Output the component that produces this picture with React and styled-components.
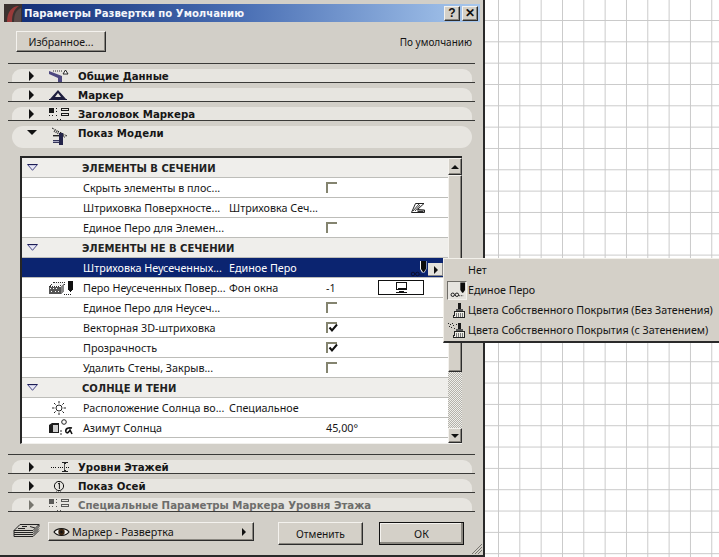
import React from "react";
import styled, { createGlobalStyle, css } from "styled-components";

const Global = createGlobalStyle`
  html, body { margin: 0; padding: 0; }
  body {
    width: 719px; height: 557px; overflow: hidden; background-color: #fff;
    background-image:
      linear-gradient(to right, #c9c9c9 1px, transparent 1px),
      linear-gradient(to bottom, #c9c9c9 1px, transparent 1px);
    background-size: 21.33px 21.33px;
    background-position: 498px 20px;
    font-family: "Noto Sans", "Open Sans", sans-serif;
    font-size: 10.75px;
    color: #141414;
  }
`;

const raised = css`
  background: #d4d0c8;
  border: 1px solid;
  border-color: #f4f2ee #2c2c2c #2c2c2c #f4f2ee;
  box-shadow: inset -1px -1px 0 #8a8780;
`;

const Window = styled.div`
  position: relative;
  box-sizing: border-box;
  width: 485px;
  height: 557px;
  background: #d2cfc8;
  border-right: 2px solid #2a2a2a;
  border-bottom: 2px solid #2a2a2a;
  padding-top: 4px;
  display: flex;
  flex-direction: column;
`;

const TitleBar = styled.div`
  height: 18px;
  margin: 0 3px 0 4px;
  display: flex;
  align-items: center;
  background: linear-gradient(to right, #0f2a72 0%, #4a6fb4 50%, #a8c8ee 100%);
`;

const TitleText = styled.div`
  flex: 1;
  margin-left: 2px;
  color: #f4f6fb;
  font-family: "DejaVu Sans", sans-serif;
  font-weight: 700;
  font-size: 10.15px;
  white-space: nowrap;
`;

const CaptionButton = styled.div`
  ${raised}
  box-sizing: border-box;
  width: 16px;
  height: 15px;
  margin-right: ${p => p.$gap}px;
  display: flex;
  align-items: center;
  justify-content: center;
  font-family: "Liberation Sans", sans-serif;
  font-weight: 700;
  font-size: 12px;
  color: #111;
`;

const TopRow = styled.div`
  box-sizing: border-box;
  height: 41px;
  padding: 9px 11px 0 16px;
  display: flex;
  align-items: flex-start;
  justify-content: space-between;
`;

const Button = styled.div`
  ${raised}
  box-sizing: border-box;
  width: ${p => p.$w}px;
  height: ${p => p.$h}px;
  display: flex;
  align-items: center;
  justify-content: center;
  font-size: ${p => p.$fs}px;
  ${p => p.$primary && css`
    outline: 1px solid #111;
    outline-offset: -1px;
    box-shadow: inset -2px -2px 0 #8a8780, inset 1px 1px 0 #f4f2ee;
  `}
`;

const DefaultLabel = styled.div`
  margin-top: 3px;
  font-size: 10px;
  line-height: 16px;
`;

const Rule = styled.div`
  height: 1px;
  margin: 0 8px;
  background: #3a3a38;
`;

const Section = styled.div`
  padding-top: 5px;
  margin: 0 8px;
  border-bottom: ${p => (p.$open ? "none" : "1px solid #3a3a38")};
`;

const Pill = styled.div`
  position: relative;
  box-sizing: border-box;
  height: ${p => (p.$open ? 22 : 13)}px;
  margin: 0 3px 0 4px;
  padding-left: 16px;
  background: #e7e5e0;
  border-radius: ${p => (p.$open ? "11px" : "9px 9px 0 0")};
  display: flex;
  align-items: ${p => (p.$open ? "flex-start" : "center")};
  color: ${p => (p.$dim ? "#6e6e6c" : "#161616")};
`;

const Caret = styled.div`
  width: 0;
  height: 0;
  margin-top: ${p => (p.$open ? 4 : 0)}px;
  border-style: solid;
  ${p => p.$open
    ? css`margin-left: -1px; border-width: 5px 5px 0 5px; border-color: #111 transparent transparent transparent; margin-right: 6px;`
    : css`border-width: 5px 0 5px 5px; border-color: transparent transparent transparent ${p.$dim ? "#77766f" : "#111"}; margin-left: 1px; margin-right: 8px;`}
`;

const PanelIcon = styled.div`
  width: 23px;
  height: 18px;
  margin-left: 5px;
  margin-top: ${p => (p.$open ? -1 : 3)}px;
  flex: none;
  display: flex;
  justify-content: center;
`;

const PanelTitle = styled.div`
  margin-left: ${p => (p.$open ? 7 : 8)}px;
  margin-top: ${p => (p.$open ? 1 : 2)}px;
  font-family: "DejaVu Sans", sans-serif;
  font-weight: 700;
  font-size: 10.2px;
  line-height: 14px;
  white-space: nowrap;
`;

const ListWrap = styled.div`
  margin: 8px 21px 0 20px;
  height: 288px;
  display: flex;
  border-top: 2px solid #262626;
  border-left: 2px solid #262626;
  border-bottom: 1px solid #f2f1ee;
  box-sizing: border-box;
  background: #fff;
`;

const List = styled.div`
  flex: 1;
  min-width: 0;
  overflow: hidden;
`;

const Row = styled.div`
  box-sizing: border-box;
  height: 20px;
  display: grid;
  grid-template-columns: 62px 145px 97px 52px 1fr;
  align-items: center;
  border-bottom: 1px solid #bdbdb9;
  background: ${p => (p.$sel ? "#0b2470" : p.$head ? "#efeeeb" : "#fff")};
  color: ${p => (p.$sel ? "#fff" : "#161616")};
  position: relative;
`;

const Name = styled.div`
  white-space: nowrap;
  overflow: visible;
  margin-left: -1px;
  ${p => p.$head && css`
    margin-left: -2px;
    margin-top: 2px;
    font-family: "DejaVu Sans", sans-serif;
    font-weight: 700;
    font-size: 10px;
    color: #222;
  `}
`;

const Cell = styled.div`
  white-space: nowrap;
  display: flex;
  align-items: center;
`;

const Check = styled.div`
  position: relative;
  box-sizing: border-box;
  width: 11px;
  height: 11px;
  border-top: 2px solid #84846f;
  border-left: 2px solid #84846f;
  margin-top: -1px;
`;

const Tick = styled.svg`
  position: absolute;
  left: 0;
  top: -1px;
`;

const ColorBox = styled.div`
  box-sizing: border-box;
  width: 46px;
  height: 15px;
  border: 1px solid #111;
  display: flex;
  align-items: center;
  justify-content: center;
`;

const Scroll = styled.div`
  width: 14px;
  flex: none;
  display: flex;
  flex-direction: column;
  background-color: #e6e5e0;
  background-image: repeating-conic-gradient(#b4b2ab 0 25%, #efeeea 0 50%);
  background-size: 2px 2px;
`;

const ScrollBtn = styled.div`
  ${raised}
  box-sizing: border-box;
  height: ${p => p.$h}px;
  display: flex;
  align-items: center;
  justify-content: center;
  flex: none;
`;

const Arrow = styled.div`
  width: 0;
  height: 0;
  border-style: solid;
  border-width: ${p => (p.$up ? "0 4px 4px 4px" : "4px 4px 0 4px")};
  border-color: ${p => (p.$up ? "transparent transparent #111 transparent" : "#111 transparent transparent transparent")};
`;

const Spacer = styled.div`
  flex: 1;
`;

const ListGap = styled.div`
  height: 10px;
  flex: none;
`;

const RowArrowBtn = styled.div`
  position: absolute;
  left: 406px;
  top: 5px;
  width: 15px;
  height: 13px;
  background: #e4e2dc;
  box-shadow: inset -1px -1px 0 #888;
  display: flex;
  align-items: center;
  justify-content: center;
`;

const RightTri = styled.div`
  width: 0;
  height: 0;
  border-style: solid;
  border-width: 4px 0 4px 4px;
  border-color: transparent transparent transparent #111;
`;

const RowIcons = styled.div`
  position: absolute;
  left: 386px;
  top: 3px;
  line-height: 0;
`;

const BottomRow = styled.div`
  padding: 10px 0 0 13px;
  display: flex;
  align-items: flex-start;
`;

const LayersBox = styled.div`
  width: 27px;
  margin: 1px 8px 0 0;
  line-height: 0;
`;

const Popup = styled.div`
  ${raised}
  width: 206px;
  height: 19px;
  box-sizing: border-box;
  padding: 0 7px 0 4px;
  display: flex;
  align-items: center;
  gap: 2px;
  margin-right: 24px;
`;

const PopupText = styled.div`
  flex: 1;
  white-space: nowrap;
`;

const OkGap = styled.div`
  width: 16px;
`;

const Grip = styled.svg`
  position: absolute;
  right: 0;
  bottom: 0;
`;

const Menu = styled.div`
  position: absolute;
  left: 443px;
  top: 258px;
  box-sizing: border-box;
  width: 276px;
  height: 85px;
  padding: 1px 0 0 3px;
  background: #d4d0c8;
  border-top: 1px solid #f2f0ea;
  border-left: 1px solid #f2f0ea;
  border-bottom: 2px solid #2a2a2a;
`;

const MenuItem = styled.div`
  height: 20px;
  display: flex;
  align-items: center;
  white-space: nowrap;
`;

const MenuIcon = styled.div`
  box-sizing: border-box;
  width: 20px;
  height: 19px;
  margin-right: 1px;
  flex: none;
  line-height: 0;
  display: flex;
  align-items: center;
  justify-content: flex-end;
  ${p => p.$on && css`
    border: 1px solid;
    border-color: #6f6d68 #f4f2ee #f4f2ee #6f6d68;
    background: #e6e4df;
  `}
`;

const MenuText = styled.div`
  font-size: 10.7px;
`;

const HeadIcon = styled.div`
  padding-left: 5px;
  line-height: 0;
`;

const RowIconCell = styled.div`
  display: flex;
  padding-left: ${p => p.$pad || 26}px;
  line-height: 0;
`;

const HatchCell = styled.div`
  padding-left: 33px;
  line-height: 0;
`;

const Ink = "#1e1e3e";
const Violet = "#4d4880";

const Svg = ({ w, h, children }) => (
  <svg width={w} height={h} viewBox={`0 0 ${w} ${h}`} shapeRendering="crispEdges">{children}</svg>
);

const IconGeneral = () => (
  <svg width="23" height="16" viewBox="0 0 23 16">
    <path d="M2 3 L15 8 V14 H11 V10 L2 6 Z" fill={Violet} />
    <path d="M6 3 H16" stroke="#333" strokeDasharray="1 1" />
    <path d="M16 6 L18.5 2 L21 6 Z" fill="#fff" stroke="#222" />
  </svg>
);
const IconMarker = () => (
  <Svg w={19} h={14}>
    <path d="M1 12 L9 3 L17 12 Z M6 10 L12 10 L9 6 Z" fill={Ink} fillRule="evenodd" shapeRendering="auto" />
    <path d="M0 12 H18 V13 H0 Z" fill={Ink} />
  </Svg>
);
const IconHeader = ({ dim }) => {
  const c = dim ? "#5a5a58" : "#1a1a1a";
  return (
    <Svg w={21} h={17}>
      <path d="M1 2 H6 V7 H1 Z" fill={c} />
      <path d="M8 2 H9 V3 H8 Z M8 5 H9 V6 H8 Z M1 9 H2 V10 H1 Z M4 9 H5 V10 H4 Z M8 9 H9 V10 H8 Z M9 13 H10 V14 H9 Z M12 13 H13 V14 H12 Z" fill={c} />
      <path d="M13.5 2.5 H20.5 V4.5 H13.5 Z M13.5 7.5 H20.5 V9.5 H13.5 Z" fill="none" stroke={c} />
    </Svg>
  );
};
const IconModel = () => (
  <svg width="19" height="21" viewBox="0 0 19 21">
    <path d="M2 3 L17 11" stroke="#222" strokeDasharray="2 1" />
    <path d="M4 6 L15 12" stroke="#333" strokeDasharray="1 1" strokeWidth="2" />
    <path d="M9 8 H13 V20 H9 Z" fill="#24244a" />
    <path d="M3 10 H9 V11.4 H3 Z" fill="#222" />
    <path d="M3 15 H9 V18 H3 Z" fill="#34345a" />
    <path d="M3 16 H9 V17 H3 Z" fill="#a8a8c0" />
  </svg>
);
const IconLevels = () => (
  <Svg w={20} h={15}>
    <path d="M2 8 H7 M9 8 H20" stroke="#111" strokeDasharray="1 1" />
    <path d="M13 3 H19 V4 H17 L16 5 H15 L14 4 H13 Z M13 13 H19 V12 H17 L16 11 H15 L14 12 H13 Z" fill="#222" />
    <path d="M15 5 V11" stroke="#555" />
  </Svg>
);
const IconAxis = () => (
  <svg width="12" height="15" viewBox="0 0 12 15">
    <circle cx="6" cy="8" r="4.6" fill="none" stroke="#111" />
    <path d="M5 6 L6.4 5 V11" fill="none" stroke="#111" />
    <path d="M3 14 H9" stroke="#333" strokeDasharray="1 1" />
  </svg>
);
const IconLayers = () => (
  <svg width="27" height="16" viewBox="0 0 27 16">
    <g fill="none" stroke="#222">
      <path d="M7 1.5 H26 L20 7.5 H1 Z" />
      <path d="M1 7.5 V9.5 H20 L26 3.5 V1.5" />
      <path d="M1 9.5 V11.5 H20 L26 5.5" />
      <path d="M1 11.5 V13.5 H20 L26 7.5" />
      <path d="M9 3.5 H14 M5 5.5 H12 M17 3.5 L22 5" />
    </g>
  </svg>
);
const IconEye = () => (
  <svg width="17" height="12" viewBox="0 0 17 12">
    <path d="M1 6 C4 1.5 13 1.5 16 6 C13 10.5 4 10.5 1 6 Z" fill="#f4f2ee" stroke="#111" strokeWidth="1.2" />
    <circle cx="8.5" cy="6" r="3.2" fill="#3a2410" />
    <circle cx="8.5" cy="6" r="1.2" fill="#111" />
  </svg>
);
const IconMonitor = () => (
  <Svg w={13} h={11}>
    <path d="M1.5 0.5 H11.5 V7.5 H1.5 Z" fill="#fff" stroke="#111" />
    <path d="M3 6 H11 V8 H3 Z" fill="#111" />
    <path d="M4 9 H9 V10 H4 Z M1 10 H12 V11 H1 Z" fill="#111" />
  </Svg>
);
const IconHatch = () => (
  <svg width="14" height="10" viewBox="0 0 14 10">
    <path d="M4.5 0.5 H13 L6.5 6.5 L13.5 7 V9.5 H0.5 Z" fill="#fff" stroke="#222" />
    <path d="M2 8 L8 1 M4 8 L9 2 M6 8 H13 M7 8.5 H12" stroke="#222" strokeWidth="0.9" />
  </svg>
);
const IconPen = ({ light }) => {
  const ring = light ? "#0a0f2e" : "#111";
  return (
    <svg width="19" height="17" viewBox="0 0 19 17">
      {light && <path d="M12 0 H18.5 V8 L16.5 11.5 H14 L12 8 Z" fill="#f2f2f2" />}
      <path d="M13 0 H18 V8 L16 11 H15 L13 8 Z" fill="#0c0c0c" />
      <circle cx="5" cy="13" r="1.8" fill="none" stroke={ring} />
      <circle cx="9.4" cy="13" r="1.8" fill="none" stroke={ring} />
      <path d="M11.5 14 H16" stroke={ring} strokeDasharray="1 1" />
    </svg>
  );
};
const IconHatchPen = () => (
  <Svg w={26} h={16}>
    <path d="M2 6 L6 2 H16 V5 L12 6 Z" fill="#f4f4f4" stroke="#333" strokeDasharray="1 1" />
    <path d="M1 7 H13 V14 H1 Z" fill="#555" />
    <path d="M2 8 H3 V9 H2 Z M5 8 H6 V9 H5 Z M8 8 H9 V9 H8 Z M3 11 H4 V12 H3 Z M7 11 H8 V12 H7 Z M10 11 H11 V12 H10 Z" fill="#fff" />
    <path d="M13 6 L16 4 V11 L13 14 Z" fill="#888" />
    <path d="M20 1 H25 V9 L23 12 H22 L20 9 Z" fill="#111" />
    <path d="M16 14 H24" stroke="#222" strokeDasharray="1 1" />
  </Svg>
);
const IconSun = () => (
  <svg width="14" height="14" viewBox="0 0 14 14">
    <circle cx="7" cy="7" r="3" fill="#fff" stroke="#222" />
    <path d="M7 0 V2.4 M7 11.6 V14 M0 7 H2.4 M11.6 7 H14 M2 2 L3.6 3.6 M10.4 10.4 L12 12 M12 2 L10.4 3.6 M3.6 10.4 L2 12" stroke="#222" />
  </svg>
);
const IconAzimuth = () => (
  <svg width="26" height="17" viewBox="0 0 26 17">
    <path d="M1 6 L4 4 H11 V14 H1 Z" fill="#1d1d1d" />
    <path d="M5 6 H10 V13 H5 Z" fill="#cfcfcf" />
    <circle cx="16" cy="3" r="2.3" fill="#fff" stroke="#222" />
    <path d="M14 12 H12 M14 15 H12" stroke="#333" />
    <path d="M24 9 C20 8 17 10 18 13 C19 15 21 13 22 11 L24 15" fill="none" stroke="#111" strokeWidth="1.6" />
  </svg>
);
const IconSunSmall = () => (
  <svg width="22" height="10" viewBox="0 0 22 10">
    <circle cx="14" cy="4" r="2.4" fill="#fff" stroke="#222" />
    <path d="M5 3 L7 7 H3 Z" fill="#222" />
  </svg>
);
const IconBrush = ({ dots }) => (
  <Svg w={20} h={17}>
    {dots && <path d="M1 1 H2 V2 H1 Z M3 2 H4 V3 H3 Z M5 1 H6 V2 H5 Z M2 4 H3 V5 H2 Z M4 5 H5 V6 H4 Z M6 3 H7 V4 H6 Z M7 6 H8 V7 H7 Z M9 2 H10 V3 H9 Z" fill="#222" />}
    <path d="M11 1 H14 V7 H11 Z" fill="#1a1a1a" />
    <path d="M9 7 H16 V9 H9 Z" fill="#555" />
    <path d="M8 9.5 H17 V15.5 H6.5 Z" fill="#efede6" stroke="#222" />
    <path d="M9 11 V15 M11 11 V15 M13 11 V15 M15 11 V15" stroke="#777" />
  </Svg>
);
const IconLogo = () => (
  <svg width="18" height="18" viewBox="0 0 18 18">
    <rect width="18" height="18" fill="#3c3230" />
    <path d="M3 18 C3 8 8 2 15 2 C10 5 8 10 8 18 Z" fill="#9a3a3a" />
    <path d="M10 18 C10 10 12 6 17 4 V18 Z" fill="#5b4a48" />
  </svg>
);
const Triangle = () => (
  <svg width="11" height="7" viewBox="0 0 11 7">
    <path d="M0.7 0.7 H10.3 L5.5 6.3 Z" fill="#e6e6f4" stroke="#4a4a8a" />
    <path d="M0.5 0.5 H10.5" stroke="#1c1c54" />
  </svg>
);

const rows = [
  { head: true, name: "ЭЛЕМЕНТЫ В СЕЧЕНИИ" },
  { name: "Скрыть элементы в плос...", check: false },
  { name: "Штриховка Поверхносте...", value: "Штриховка Сеч...", extra: <IconHatch /> },
  { name: "Единое Перо для Элемен...", check: false },
  { head: true, name: "ЭЛЕМЕНТЫ НЕ В СЕЧЕНИИ" },
  { sel: true, name: "Штриховка Неусеченных...", value: "Единое Перо" },
  { icon: <IconHatchPen />, name: "Перо Неусеченных Повер...", value: "Фон окна", num: "-1", box: true },
  { name: "Единое Перо для Неусеч...", check: false },
  { name: "Векторная 3D-штриховка", check: true },
  { name: "Прозрачность", check: true },
  { name: "Удалить Стены, Закрыв...", check: false },
  { head: true, name: "СОЛНЦЕ И ТЕНИ" },
  { icon: <IconSun />, pad: 30, name: "Расположение Солнца во...", value: "Специальное" },
  { icon: <IconAzimuth />, name: "Азимут Солнца", num: "45,00°" },
  { icon: <IconSunSmall />, pad: 27, name: "" },
];

const Panel = ({ icon, title, dim, open }) => (
  <Section $open={open}>
    <Pill $open={open} $dim={dim}>
      <Caret $open={open} $dim={dim} />
      <PanelIcon $open={open}>{icon}</PanelIcon>
      <PanelTitle $open={open}>{title}</PanelTitle>
    </Pill>
  </Section>
);

export default function App() {
  return (
    <>
      <Global />
      <Window>
        <TitleBar>
          <IconLogo />
          <TitleText>Параметры Развертки по Умолчанию</TitleText>
          <CaptionButton $gap={2}>?</CaptionButton>
          <CaptionButton $gap={2}>✕</CaptionButton>
        </TitleBar>
        <TopRow>
          <Button $w={90} $h={21} $fs={10.5}>Избранное...</Button>
          <DefaultLabel>По умолчанию</DefaultLabel>
        </TopRow>
        <Rule />
        <Panel icon={<IconGeneral />} title="Общие Данные" />
        <Panel icon={<IconMarker />} title="Маркер" />
        <Panel icon={<IconHeader />} title="Заголовок Маркера" />
        <Panel open icon={<IconModel />} title="Показ Модели" />
        <ListWrap>
          <List>
            {rows.map((r, i) => (
              <Row key={i} $head={r.head} $sel={r.sel}>
                {r.head ? (
                  <HeadIcon><Triangle /></HeadIcon>
                ) : (
                  <RowIconCell $pad={r.pad}>{r.icon}</RowIconCell>
                )}
                <Name $head={r.head}>{r.name}</Name>
                <Cell>{r.value}</Cell>
                <Cell>
                  {r.check !== undefined && (
                    <Check>
                      {r.check && (
                        <Tick width="11" height="11" viewBox="0 0 11 11">
                          <path d="M1.5 4.5 L4 7.5 L9 1.5" fill="none" stroke="#111" strokeWidth="2" />
                        </Tick>
                      )}
                    </Check>
                  )}
                  {r.num}
                </Cell>
                <Cell>
                  {r.box && <ColorBox><IconMonitor /></ColorBox>}
                  {r.extra && <HatchCell>{r.extra}</HatchCell>}
                </Cell>
                {r.sel && (
                  <>
                    <RowIcons><IconPen light /></RowIcons>
                    <RowArrowBtn><RightTri /></RowArrowBtn>
                  </>
                )}
              </Row>
            ))}
          </List>
          <Scroll>
            <ScrollBtn $h={17}><Arrow $up /></ScrollBtn>
            <ScrollBtn $h={197} />
            <Spacer />
            <ScrollBtn $h={15}><Arrow /></ScrollBtn>
          </Scroll>
        </ListWrap>
        <ListGap />
        <Rule />
        <Panel icon={<IconLevels />} title="Уровни Этажей" />
        <Panel icon={<IconAxis />} title="Показ Осей" />
        <Panel dim icon={<IconHeader dim />} title="Специальные Параметры Маркера Уровня Этажа" />
        <BottomRow>
          <LayersBox><IconLayers /></LayersBox>
          <Popup>
            <IconEye />
            <PopupText>Маркер - Развертка</PopupText>
            <RightTri />
          </Popup>
          <Button $w={85} $h={23} $fs={10.2}>Отменить</Button>
          <OkGap />
          <Button $w={85} $h={23} $fs={10.7} $primary>ОК</Button>
        </BottomRow>
        <Grip width="12" height="12" viewBox="0 0 12 12">
          <path d="M1 11 L11 1 M4 11 L11 4 M7 11 L11 7" stroke="#77756f" />
        </Grip>
      </Window>
      <Menu>
        <MenuItem><MenuIcon /><MenuText>Нет</MenuText></MenuItem>
        <MenuItem><MenuIcon $on><IconPen /></MenuIcon><MenuText>Единое Перо</MenuText></MenuItem>
        <MenuItem><MenuIcon><IconBrush /></MenuIcon><MenuText>Цвета Собственного Покрытия (Без Затенения)</MenuText></MenuItem>
        <MenuItem><MenuIcon><IconBrush dots /></MenuIcon><MenuText>Цвета Собственного Покрытия (с Затенением)</MenuText></MenuItem>
      </Menu>
    </>
  );
}
